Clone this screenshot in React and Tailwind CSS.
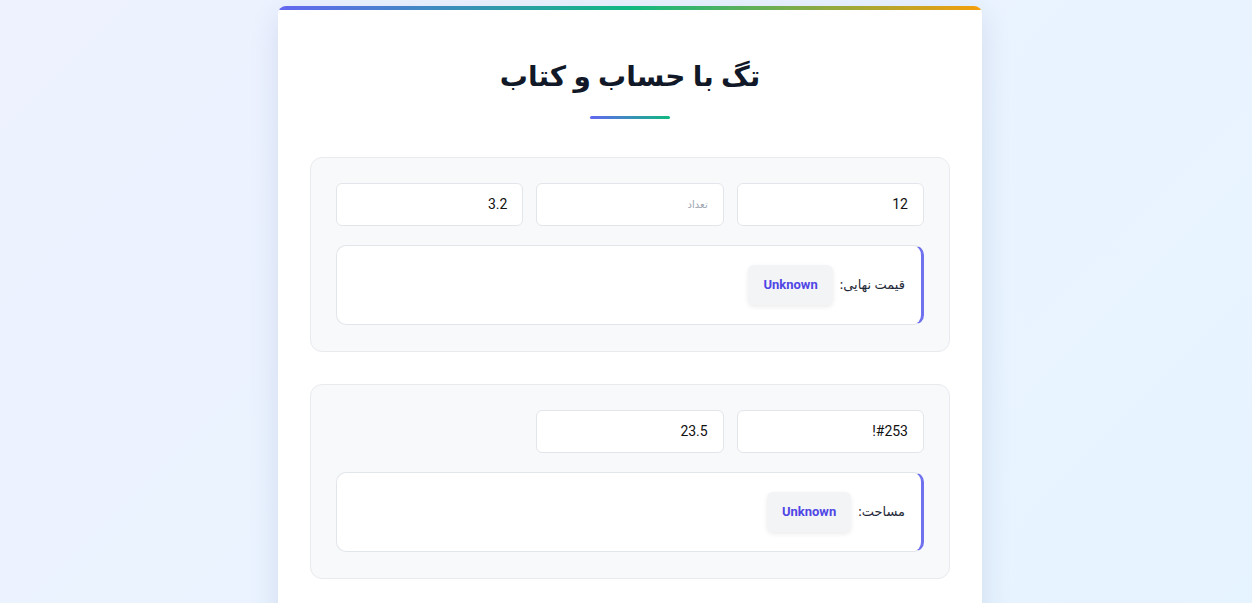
import React from "react";

const fa = { fontFamily: '"Noto Sans", "DejaVu Sans", Roboto, sans-serif' };

function Input({ value, placeholder }) {
  return (
    <div className="h-[43px] rounded-[6px] border border-[#e2e5ea] bg-white flex items-center px-[15px]">
      {value ? (
        <span className="text-[14px] text-[#111] font-['Roboto']" dir="ltr">{value}</span>
      ) : (
        <span className="text-[10px] text-[#9ca3af]" style={fa}>{placeholder}</span>
      )}
    </div>
  );
}

function Result({ label }) {
  return (
    <div className="h-[80px] rounded-[10px] border border-[#e2e5ea] border-r-[3px] border-r-[#6f71ef] bg-white flex items-center pr-[16px] gap-[7px]">
      <span className="text-[13px] text-[#1f2937]" style={fa}>{label}</span>
      <span className="h-[40px] px-[15px] flex items-center rounded-[6px] bg-[#f3f4f6] shadow-[0_2px_5px_rgba(0,0,0,0.08)] text-[13px] font-bold text-[#4f46e5] font-['Roboto']" dir="ltr">
        Unknown
      </span>
    </div>
  );
}

export default function App() {
  return (
    <div className="min-h-[603px] w-full bg-[linear-gradient(135deg,#eef2ff_0%,#e6f4ff_100%)] pt-[6px] pl-[8px] overflow-hidden" dir="rtl">
      <div className="mx-auto w-[704px] bg-white rounded-t-[8px] shadow-[0_8px_30px_rgba(30,60,120,0.12)] overflow-hidden min-h-[620px]">
        <div className="h-[4px] bg-[linear-gradient(90deg,#6366f1_0%,#10b981_50%,#f59e0b_100%)]" />
        <div className="px-[32px] pt-[41px] pb-[32px]">
          <h1 className="text-center text-[28px] font-bold text-[#111827] leading-[48px]" style={fa}>
            تگ با حساب و کتاب
          </h1>
          <div className="mx-auto mt-[17px] w-[80px] h-[3px] rounded-full bg-[linear-gradient(90deg,#6366f1,#10b981)]" />

          <div className="mt-[38px] flex flex-col gap-[32px]">
            <div className="rounded-[12px] border border-[#e8eaee] bg-[#f8f9fa] px-[25px] pt-[25px] pb-[26px]">
              <div className="grid grid-cols-3 gap-[13px]">
                <Input value="12" />
                <Input placeholder="تعداد" />
                <Input value="3.2" />
              </div>
              <div className="mt-[19px]">
                <Result label="قیمت نهایی:" />
              </div>
            </div>

            <div className="rounded-[12px] border border-[#e8eaee] bg-[#f8f9fa] px-[25px] pt-[25px] pb-[26px]">
              <div className="grid grid-cols-3 gap-[13px]">
                <Input value="!#253" />
                <Input value="23.5" />
              </div>
              <div className="mt-[19px]">
                <Result label="مساحت:" />
              </div>
            </div>
          </div>
        </div>
      </div>
    </div>
  );
}
